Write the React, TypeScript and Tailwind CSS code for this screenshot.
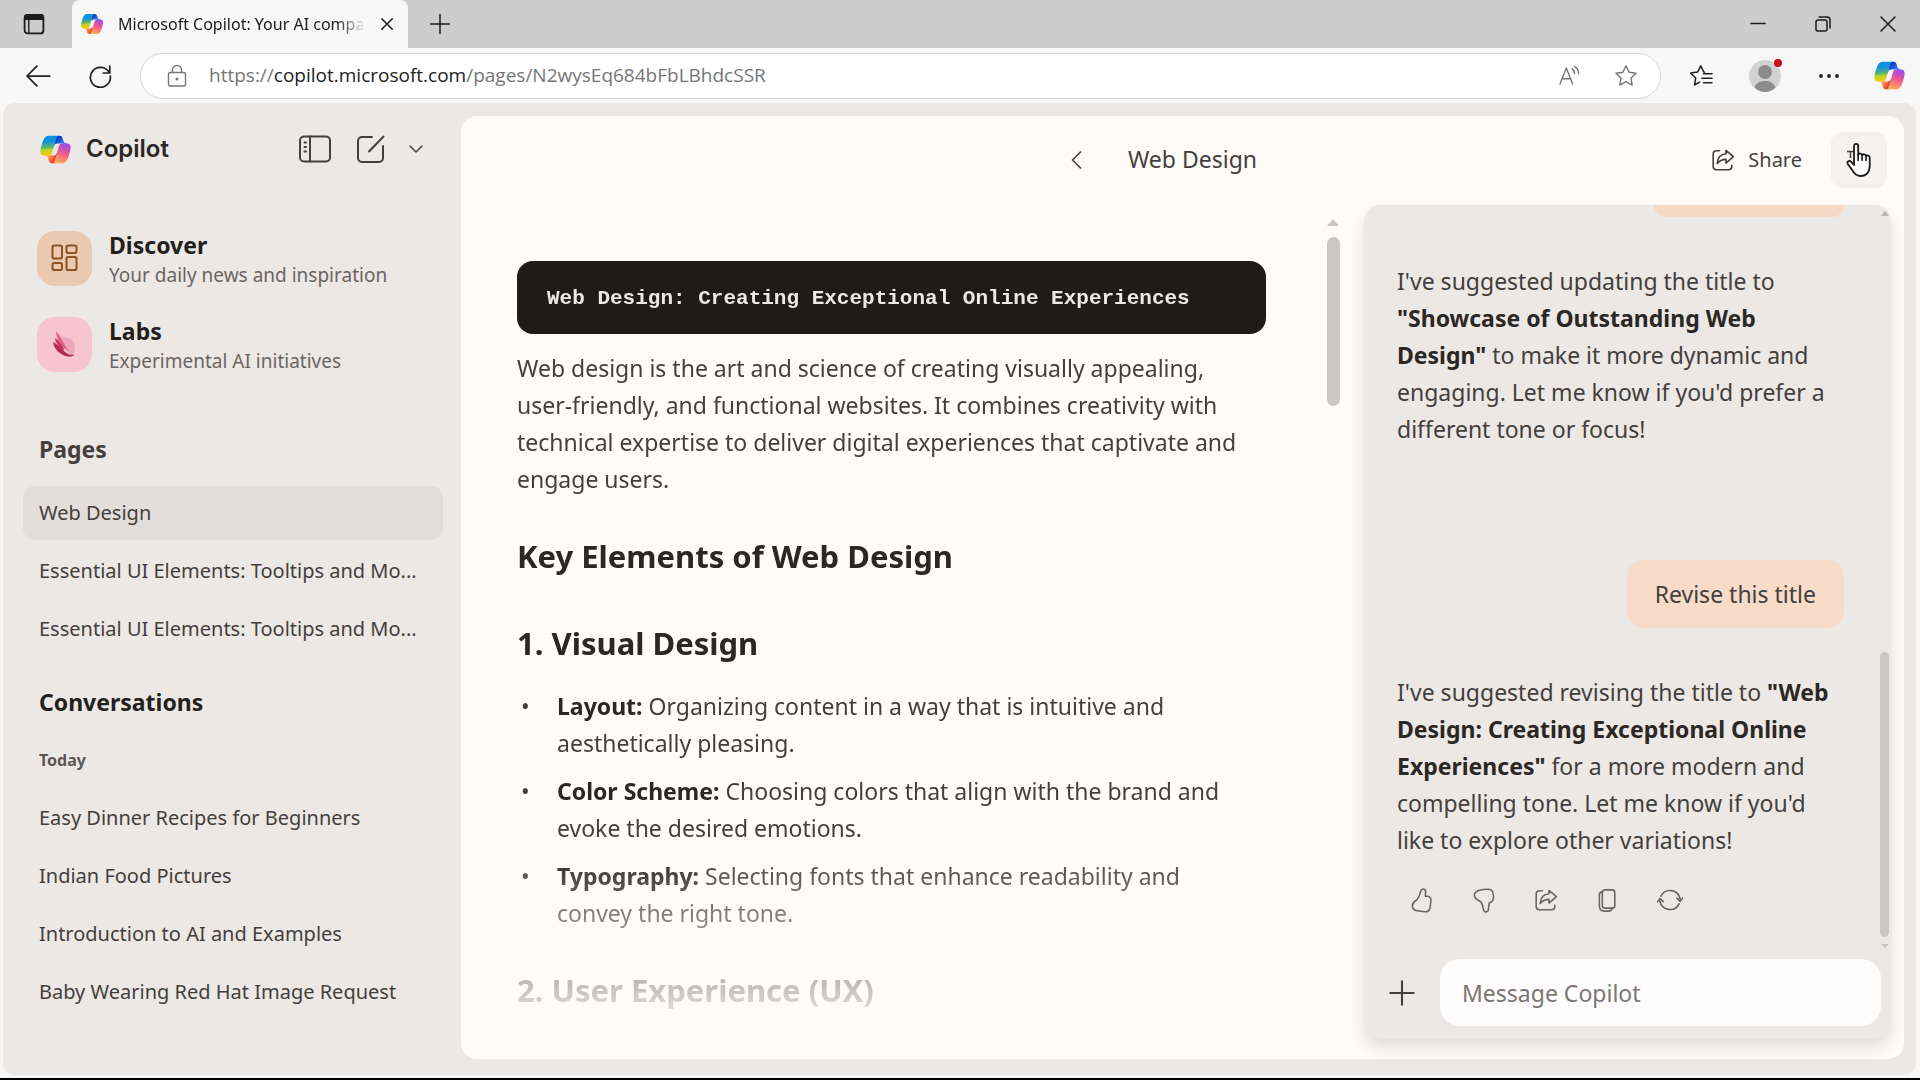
import { ReactNode, useId } from "react";

type IconProps = {
  className?: string;
  children?: ReactNode;
  viewBox?: string;
  strokeWidth?: number;
};

function Icon({
  className,
  children,
  viewBox = "0 0 24 24",
  strokeWidth = 1.5,
}: IconProps) {
  return (
    <svg
      className={className}
      viewBox={viewBox}
      fill="none"
      stroke="currentColor"
      strokeWidth={strokeWidth}
      strokeLinecap="round"
      strokeLinejoin="round"
      aria-hidden="true"
    >
      {children}
    </svg>
  );
}

function CopilotLogo({ className }: { className?: string }) {
  const id = useId();

  return (
    <svg className={className} viewBox="0 0 48 48" fill="none" aria-hidden="true">
      <defs>
        <radialGradient
          id={`${id}a`}
          cx="0"
          cy="0"
          r="1"
          gradientUnits="userSpaceOnUse"
          gradientTransform="matrix(-10.96 -13.39 12.59 -10.31 38 20.4)"
        >
          <stop offset="0.1" stopColor="#00AEFF" />
          <stop offset="0.77" stopColor="#2253CE" />
          <stop offset="1" stopColor="#0736C4" />
        </radialGradient>
        <radialGradient
          id={`${id}b`}
          cx="0"
          cy="0"
          r="1"
          gradientUnits="userSpaceOnUse"
          gradientTransform="matrix(9.88 12.57 -12.19 9.58 11.2 32.8)"
        >
          <stop stopColor="#FFB657" />
          <stop offset="0.63" stopColor="#FF5F3D" />
          <stop offset="0.92" stopColor="#C02B3C" />
        </radialGradient>
        <linearGradient
          id={`${id}c`}
          x1="12.5"
          y1="7.5"
          x2="14.8"
          y2="33.9"
          gradientUnits="userSpaceOnUse"
        >
          <stop offset="0.16" stopColor="#0D91E1" />
          <stop offset="0.49" stopColor="#52B471" />
          <stop offset="0.65" stopColor="#BBD42D" />
          <stop offset="0.94" stopColor="#FFC800" />
        </linearGradient>
        <radialGradient
          id={`${id}d`}
          cx="0"
          cy="0"
          r="1"
          gradientUnits="userSpaceOnUse"
          gradientTransform="matrix(-12.67 36.24 -43.41 -15.18 41.3 12.1)"
        >
          <stop offset="0.07" stopColor="#8C48FF" />
          <stop offset="0.5" stopColor="#F2598A" />
          <stop offset="0.9" stopColor="#FFB152" />
        </radialGradient>
      </defs>
      <path
        fill={`url(#${id}a)`}
        d="M34.142 7.325A4.63 4.63 0 0 0 29.7 4h-1.35a4.63 4.63 0 0 0-4.554 3.794L21.48 20.407l.575-1.965a4.63 4.63 0 0 1 4.444-3.33h7.853l3.294 1.282 3.175-1.283h-.926a4.63 4.63 0 0 1-4.443-3.325l-1.31-4.461Z"
      />
      <path
        fill={`url(#${id}b)`}
        d="M14.33 40.656A4.63 4.63 0 0 0 18.779 44h2.87a4.63 4.63 0 0 0 4.629-4.51l.312-12.163-.654 2.233a4.63 4.63 0 0 1-4.443 3.329h-7.919l-2.823-1.532-3.057 1.532h.912a4.63 4.63 0 0 1 4.447 3.344l1.279 4.423Z"
      />
      <path
        fill={`url(#${id}c)`}
        d="M29.5 4H13.46c-4.583 0-7.332 6.057-9.165 12.113C2.123 23.29-.72 32.885 7.503 32.885h6.925a4.63 4.63 0 0 0 4.456-3.358 2078.617 2078.617 0 0 1 4.971-17.156c.843-2.843 1.544-5.284 2.621-6.805C27.08 4.714 28.086 4 29.5 4Z"
      />
      <path
        fill={`url(#${id}d)`}
        d="M18.498 44h16.04c4.582 0 7.332-6.058 9.165-12.115 2.171-7.177 5.013-16.775-3.208-16.775h-6.926a4.63 4.63 0 0 0-4.455 3.358 2084.036 2084.036 0 0 1-4.972 17.16c-.842 2.844-1.544 5.285-2.62 6.806-.604.852-1.61 1.566-3.024 1.566Z"
      />
    </svg>
  );
}

function ShareIcon({ className }: { className?: string }) {
  return (
    <Icon className={className} strokeWidth={1.6}>
      <path d="M8.5 2.8H5.4A3.2 3.2 0 0 0 2.2 6v12.6a3.2 3.2 0 0 0 3.2 3.2h12.2a3.2 3.2 0 0 0 3.2-3.2v-1.4" />
      <path d="M15 2.4v3.4C9.8 6.2 6.6 9.4 6.2 15.6c2.2-3 5-4.2 8.8-4.2v3.7l7.4-6.4L15 2.4Z" />
    </Icon>
  );
}

function TabStrip() {
  return (
    <div className="flex h-12 items-stretch bg-[#cdcdcd] text-[#1b1b1b]">
      <div className="flex w-[72px] items-center justify-center rounded-br-lg pr-1">
        <button type="button" aria-label="Tab actions">
          <Icon className="size-6" strokeWidth={1.8}>
            <rect x="2.6" y="3" width="18.8" height="18.4" rx="3" />
            <path d="M3 7V5.4A2.4 2.4 0 0 1 5.4 3h13.2A2.4 2.4 0 0 1 21 5.4V7Z" fill="currentColor" />
            <path d="M6.8 8v13" strokeWidth="1.4" />
          </Icon>
        </button>
      </div>
      <div className="flex w-[336px] items-center rounded-t-lg bg-[#f7f7f7] pl-2">
        <CopilotLogo className="size-6" />
        <span className="ml-[14px] w-[248px] overflow-hidden text-base whitespace-nowrap [mask-image:linear-gradient(to_right,black_88%,transparent)]">
          Microsoft Copilot: Your AI compa
        </span>
        <button type="button" aria-label="Close tab" className="ml-3">
          <Icon className="size-[18px]" strokeWidth={2}>
            <path d="m5 5 14 14M19 5 5 19" />
          </Icon>
        </button>
      </div>
      <button type="button" aria-label="New tab" className="ml-5">
        <Icon className="size-6" strokeWidth={1.5}>
          <path d="M12 2.5v19M2.5 12h19" />
        </Icon>
      </button>
      <div className="ml-auto flex items-center gap-[41px] pr-5">
        <button type="button" aria-label="Minimize">
          <Icon className="size-6">
            <path d="M5 11.5h14" />
          </Icon>
        </button>
        <button type="button" aria-label="Restore">
          <Icon className="size-6">
            <rect x="5" y="8" width="11" height="11" rx="2" />
            <path d="M8 5h8a3 3 0 0 1 3 3v8" />
          </Icon>
        </button>
        <button type="button" aria-label="Close">
          <Icon className="size-6">
            <path d="m5 5 14 14M19 5 5 19" />
          </Icon>
        </button>
      </div>
    </div>
  );
}

function Toolbar() {
  return (
    <div className="flex h-[55px] items-center bg-[#f7f7f7] pr-[14px] pl-6 text-[#222]">
      <button type="button" aria-label="Back">
        <Icon className="size-7" strokeWidth={1.5}>
          <path d="M22 12H3m8-8.5L2.6 12l8.4 8.5" />
        </Icon>
      </button>
      <button type="button" aria-label="Refresh" className="ml-9">
        <Icon className="size-6" strokeWidth={1.7}>
          <path d="M21.4 9A10 10 0 1 0 22.3 12M21.8 2v7h-6.6" />
        </Icon>
      </button>
      <div className="ml-7 flex h-[46px] flex-1 items-center rounded-full border border-[#d6d6d6] bg-white pr-[22px] pl-6 text-[#767676]">
        <Icon className="size-6" strokeWidth={1.4}>
          <rect x="3.5" y="8.5" width="17" height="13.5" rx="2" />
          <path d="M7.5 8.5V6a4.5 4.5 0 0 1 9 0v2.5" />
          <circle cx="12" cy="15" r="0.8" fill="currentColor" />
        </Icon>
        <span className="ml-5 font-['Open_Sans',sans-serif] text-[19px] whitespace-nowrap">
          https://<span className="text-[#222]">copilot.microsoft.com</span>
          /pages/N2wysEq684bFbLBhdcSSR
        </span>
        <button type="button" aria-label="Read aloud" className="ml-auto">
          <Icon className="size-6" strokeWidth={1.4}>
            <path d="m2 20 6.3-16L14.6 20M4.2 14.8h8.2M14.2 4.6c1.4 1.2 2.3 3 2.3 5.2M16.8 2.4c2.4 1.8 3.8 4.4 3.8 7.4" />
          </Icon>
        </button>
        <button type="button" aria-label="Add to favorites" className="ml-8">
          <Icon className="size-6" strokeWidth={1.4}>
            <path d="m12 1.8 3.1 6.4 7 1-5.1 4.9 1.2 7-6.2-3.4-6.2 3.4 1.2-7L1.9 9.2l7-1L12 1.8Z" />
          </Icon>
        </button>
      </div>
      <button type="button" aria-label="Favorites" className="ml-7">
        <Icon className="size-6" strokeWidth={1.5}>
          <path d="m15.5 8.2-.6-.1-3.2-6.3-3.1 6.3-6.9 1 5 4.9-1.2 7 5.2-2.8M14.5 9.8H23M13 14.2h10M14.5 18.8H23" />
        </Icon>
      </button>
      <button type="button" aria-label="Profile" className="relative ml-9">
        <svg className="size-8" viewBox="0 0 32 32" aria-hidden="true">
          <circle cx="16" cy="16" r="16" fill="#d2d2d2" />
          <circle cx="16" cy="12" r="7" fill="#8c8c8c" />
          <path d="M5.5 27.5c1.5-4.5 5.5-6.500 10.500-6.500s9 2 10.500 6.500A16 16 0 0 1 16 32a16 16 0 0 1-10.500-4.500Z" fill="#8c8c8c" />
        </svg>
        <span className="absolute -top-px -right-px size-2 rounded-full bg-[#c50f1f]" />
      </button>
      <button type="button" aria-label="Settings and more" className="ml-9">
        <Icon className="size-6">
          <g fill="currentColor" stroke="none">
            <circle cx="4" cy="12" r="1.9" />
            <circle cx="12" cy="12" r="1.9" />
            <circle cx="20" cy="12" r="1.9" />
          </g>
        </Icon>
      </button>
      <button type="button" aria-label="Copilot" className="ml-8">
        <CopilotLogo className="size-[33px]" />
      </button>
    </div>
  );
}

const pages = [
  "Web Design",
  "Essential UI Elements: Tooltips and Mo...",
  "Essential UI Elements: Tooltips and Mo...",
];

const conversations = [
  "Easy Dinner Recipes for Beginners",
  "Indian Food Pictures",
  "Introduction to AI and Examples",
  "Baby Wearing Red Hat Image Request",
];

type SidebarItemProps = {
  title: string;
  active?: boolean;
};

function SidebarItem({ title, active }: SidebarItemProps) {
  return (
    <li className="flex h-[58px] items-center">
      <a
        href="#"
        className={
          active
            ? "flex h-[54px] w-full items-center rounded-xl bg-[#e2dedb] px-4 whitespace-nowrap"
            : "flex h-[54px] w-full items-center px-4 whitespace-nowrap"
        }
      >
        {title}
      </a>
    </li>
  );
}

type FeatureProps = {
  title: string;
  text: string;
  icon: ReactNode;
};

function Feature({ title, text, icon }: FeatureProps) {
  return (
    <a href="#" className="flex h-14 items-center gap-[17px]">
      {icon}
      <span className="flex flex-col pt-1">
        <span className="text-[23px] leading-[30px] font-bold text-[#221f1d]">{title}</span>
        <span className="text-[19px] leading-[30px] text-[#6b6562]">{text}</span>
      </span>
    </a>
  );
}

function Sidebar() {
  return (
    <aside className="w-[458px] shrink-0 pr-[18px] pl-5 text-xl text-[#443f3c]">
      <div className="flex h-[92px] items-center pl-4">
        <CopilotLogo className="size-[33px]" />
        <span className="ml-[14px] font-['Inter',sans-serif] text-2xl font-semibold text-[#2b2725]">
          Copilot
        </span>
        <div className="ml-auto flex items-center pr-[18px]">
          <button type="button" aria-label="Toggle sidebar">
            <Icon className="h-7 w-8" viewBox="0 0 32 28" strokeWidth={2}>
              <rect x="1" y="1.5" width="30" height="25" rx="4" />
              <path d="M11 1.5v25M5.5 7.5H7M5.5 12H7M5.5 16.5H7" />
            </Icon>
          </button>
          <button type="button" aria-label="New chat" className="ml-[26px]">
            <Icon className="size-7" viewBox="0 0 28 28" strokeWidth={2}>
              <path d="M15 2H5a4 4 0 0 0-4 4v17a4 4 0 0 0 4 4h17a4 4 0 0 0 4-4V11M12 16.5 26.5 1.5" />
            </Icon>
          </button>
          <button type="button" aria-label="More" className="ml-[22px]">
            <Icon className="size-[18px]" strokeWidth={2}>
              <path d="m4 8 8 8 8-8" />
            </Icon>
          </button>
        </div>
      </div>

      <nav className="mt-[35px] flex flex-col gap-[30px] pl-[14px]">
        <Feature
          title="Discover"
          text="Your daily news and inspiration"
          icon={
            <span className="flex size-[55px] items-center justify-center rounded-[18px] bg-[#ebc8b0] text-[#8a5227]">
              <Icon className="size-7" viewBox="0 0 28 28" strokeWidth={2}>
                <rect x="1.500" y="1.500" width="9.500" height="13" rx="1.800" />
                <rect x="15.500" y="1.500" width="10" height="7.500" rx="1.800" />
                <rect x="1.500" y="19" width="9.500" height="7" rx="1.800" />
                <rect x="15.500" y="13" width="10" height="13" rx="1.800" />
              </Icon>
            </span>
          }
        />
        <Feature
          title="Labs"
          text="Experimental AI initiatives"
          icon={
            <span className="flex size-[55px] items-center justify-center rounded-[18px] bg-[#f7c5cf]">
              <svg className="size-7" viewBox="0 0 28 28" aria-hidden="true">
                <path d="M5.500 1.500c4 3 7 6.500 10.500 6.500 5 0 8 4 8 9.500 0 3-1 6-2.500 7.500C16 22 9.500 14 5.500 1.500Z" fill="#eda6bd" />
                <path d="M5 1.500C5 7 8 12.500 12 17l6 5C14 15 10 7.500 5 1.500Z" fill="#db6386" />
                <path d="M2 12c.5 6.500 7 13 14.500 14.500 3.500.5 6.500-.5 7-2-5 1-8.500-1-12-5C9 16.500 5.500 13.500 2 12Z" fill="#b62a56" />
                <path d="M4 8c0 4 4.500 10 9.500 12.500C11.500 15 8 10.500 4 8Z" fill="#cc2f5e" />
              </svg>
            </span>
          }
        />
      </nav>

      <h2 className="mt-[59px] pl-4 text-[23px] leading-9 font-bold">Pages</h2>
      <ul className="mt-[17px]">
        {pages.map((title, index) => (
          <SidebarItem key={index} title={title} active={index === 0} />
        ))}
      </ul>

      <h2 className="mt-[26px] pl-4 text-[23px] leading-9 font-bold text-[#221f1d]">
        Conversations
      </h2>
      <h3 className="mt-[27px] pl-4 text-base leading-[26px] font-bold text-[#5c5653]">Today</h3>
      <ul className="mt-4">
        {conversations.map((title) => (
          <SidebarItem key={title} title={title} />
        ))}
      </ul>
    </aside>
  );
}

function PageHeader() {
  return (
    <header className="relative flex h-[89px] shrink-0 items-center justify-center pr-9 pb-0.5">
      <button type="button" aria-label="Back to pages" className="flex h-14 w-14 items-center justify-center">
        <Icon className="size-6" strokeWidth={1.7}>
          <path d="M15.500 4 7.500 12l8 8" />
        </Icon>
      </button>
      <h1 className="px-[23px] text-[23px]">Web Design</h1>
      <div className="absolute right-[17px] flex items-center gap-[29px]">
        <button type="button" className="flex items-center gap-[13px] text-xl">
          <ShareIcon className="size-6" />
          Share
        </button>
        <button
          type="button"
          aria-label="More options"
          className="flex size-14 items-center justify-center rounded-xl bg-[#f5f1ef]"
        >
          <svg className="h-9 w-8" viewBox="0 0 32 36" aria-hidden="true">
            <path d="M4 9.500h8M7.500 10v6" stroke="#443f3c" strokeWidth="1.500" />
            <path
              d="M11 19.500V4.200c0-3 4.200-3 4.200 0v8.500c.600-1.800 3.600-1.500 3.900.600.800-1.700 3.600-1.300 3.900.800 1-1.300 3.700-.700 3.700 1.600v8.500c0 5.800-3.700 9.800-9 9.800-4.300 0-6.500-2.300-8.500-6L4.800 22c-1.300-2.400 1.400-4.200 3.200-2.300l3 3.300v-3.500Z"
              fill="#fff"
              stroke="#1b1b1b"
              strokeWidth="1.800"
              strokeLinejoin="round"
            />
            <path d="M15.200 12.500v6M19.100 13.500v5M23 14.200v4.300" stroke="#1b1b1b" strokeWidth="1.600" strokeLinecap="round" />
          </svg>
        </button>
      </div>
    </header>
  );
}

const elements = [
  {
    term: "Layout:",
    lines: ["Organizing content in a way that is intuitive and", "aesthetically pleasing."],
  },
  {
    term: "Color Scheme:",
    lines: ["Choosing colors that align with the brand and", "evoke the desired emotions."],
  },
  {
    term: "Typography:",
    lines: ["Selecting fonts that enhance readability and", "convey the right tone."],
  },
];

function Document() {
  return (
    <div className="flex min-w-0 flex-1">
      <article className="mb-12 min-w-0 flex-1 overflow-hidden pt-14 pl-14 text-[23px] leading-[37px] [mask-image:linear-gradient(to_bottom,black_80%,rgba(0,0,0,0.15)_100%)]">
        <pre className="rounded-2xl bg-[#1f1b18] px-[30px] pt-[19px] pb-[17px] font-['Liberation_Mono',monospace] text-[21px] font-bold text-[#ece8e4]">
          Web Design: Creating Exceptional Online Experiences
        </pre>
        <p className="mt-4 whitespace-nowrap">
          Web design is the art and science of creating visually appealing,
          <br />
          user-friendly, and functional websites. It combines creativity with
          <br />
          technical expertise to deliver digital experiences that captivate and
          <br />
          engage users.
        </p>
        <h2 className="mt-9 text-[31px] leading-[44px] font-bold text-[#2b2725]">
          Key Elements of Web Design
        </h2>
        <h3 className="mt-[43px] text-[31px] leading-[44px] font-bold text-[#2b2725]">
          1. Visual Design
        </h3>
        <ul className="mt-[23px] flex flex-col gap-[11px] whitespace-nowrap">
          {elements.map(({ term, lines }) => (
            <li key={term} className="flex">
              <span className="w-10 pl-1">•</span>
              <span>
                <strong className="text-[#2b2725]">{term}</strong> {lines[0]}
                <br />
                {lines[1]}
              </span>
            </li>
          ))}
        </ul>
        <h3 className="mt-9 text-[31px] leading-[44px] font-bold text-[#2b2725]">
          2. User Experience (UX)
        </h3>
      </article>
      <div className="ml-[59px] flex w-4 flex-col items-center pt-[14px]">
        <span className="border-x-6 border-b-7 border-x-transparent border-b-[#c9c5c2]" />
        <span className="mt-[11px] h-[169px] w-[13px] rounded-full bg-[#cbc7c4]" />
      </div>
    </div>
  );
}

function MessageActions() {
  return (
    <div className="mt-7 flex gap-[37px] pl-[13px] text-[#6b6562]">
      <button type="button" aria-label="Like">
        <Icon className="size-[25px]">
          <path d="M12.8 1c1.500.2 2.200 1.300 2.200 2.800l-.3 4.200h1.800c2.400 0 3.800 1.500 3.600 3.900l-.7 6.400c-.4 3.200-2.200 4.900-5.200 4.500l-7.200-1c-3-.4-4.700-2-4.700-4.600 0-2.400 1.200-3.900 3.300-5.200 2.300-1.700 3.300-3.800 4.300-7.800.5-1.900 1.500-3.300 2.900-3.200Z" />
        </Icon>
      </button>
      <button type="button" aria-label="Dislike">
        <Icon className="size-[25px]">
          <path d="M13.5 23c1.400-.2 2.100-1.200 2.300-2.700l.7-5.800c3.200-1.200 4.500-3.600 4.100-6.900l-.4-2.500c-.4-2.600-2-3.900-4.600-3.900-3.500 0-6 .3-9.200 1.300C3.600 3.400 2.300 5 2.300 7c0 2.300 1.300 3.600 3.800 4.700 2.400 1.100 3.400 2.300 4 4.900l.8 3.700c.4 1.700 1.100 2.900 2.600 2.700Z" />
        </Icon>
      </button>
      <button type="button" aria-label="Share message">
        <ShareIcon className="size-6" />
      </button>
      <button type="button" aria-label="Copy">
        <Icon className="size-[25px]">
          <rect x="7" y="1.8" width="12" height="17.500" rx="2.500" />
          <path d="M7 3.500C5.300 3.700 4.200 4.800 4.200 6.500V17c0 3.300 1.700 5.200 5 5.200h4.300c1.600 0 2.600-.9 3-2.600" />
        </Icon>
      </button>
      <button type="button" aria-label="Regenerate">
        <Icon className="size-[26px]">
          <path d="M3.600 8.500A9.400 9.400 0 0 1 21.300 11M20.400 15.500A9.400 9.400 0 0 1 2.700 13M18.400 10.300l2.900 3 2.400-3.200M.5 13.700l2.300-3 2.900 2.800" />
        </Icon>
      </button>
    </div>
  );
}

function ChatPanel() {
  return (
    <section className="mr-[13px] mb-5 ml-[23px] flex w-[527px] shrink-0 flex-col overflow-hidden rounded-2xl bg-[#ece8e6] shadow-[0_8px_16px_rgba(0,0,0,0.12)]">
      <div className="flex min-h-0 flex-1">
        <div className="min-w-0 flex-1 overflow-hidden pl-[33px] text-[23px] leading-[37px] whitespace-nowrap">
          <div className="mr-[34px] ml-auto h-3 w-[190px] rounded-b-2xl bg-[#f6dac6]" />
          <p className="mt-[46px]">
            I've suggested updating the title to
            <br />
            <strong className="text-[#2b2725]">
              "Showcase of Outstanding Web
              <br />
              Design"
            </strong>{" "}
            to make it more dynamic and
            <br />
            engaging. Let me know if you'd prefer a
            <br />
            different tone or focus!
          </p>
          <div className="mt-[112px] mr-[34px] ml-auto flex h-[68px] w-fit items-center rounded-2xl bg-[#f8dcc9] px-7">
            Revise this title
          </div>
          <p className="mt-[46px]">
            I've suggested revising the title to{" "}
            <strong className="text-[#2b2725]">
              "Web
              <br />
              Design: Creating Exceptional Online
              <br />
              Experiences"
            </strong>{" "}
            for a more modern and
            <br />
            compelling tone. Let me know if you'd
            <br />
            like to explore other variations!
          </p>
          <MessageActions />
        </div>
        <div className="flex w-[13px] flex-col items-center justify-between pt-[6px]">
          <span className="border-x-4 border-b-5 border-x-transparent border-b-[#b9b5b2]" />
          <div className="flex flex-col items-center gap-[7px]">
            <span className="h-[285px] w-[9px] rounded-full bg-[#cbc7c4]" />
            <span className="border-x-4 border-t-4 border-x-transparent border-t-[#c9c5c2]" />
          </div>
        </div>
      </div>
      <form className="mt-[11px] flex items-center pr-[10px] pb-[13px] pl-6">
        <button type="button" aria-label="Add">
          <Icon className="size-7" strokeWidth={1.8}>
            <path d="M12 2v20M2 12h20" />
          </Icon>
        </button>
        <input
          type="text"
          aria-label="Message Copilot"
          placeholder="Message Copilot"
          className="ml-6 h-[67px] min-w-0 flex-1 rounded-[20px] bg-[#fefcfc] px-[22px] text-[23px] outline-none placeholder:text-[#7b7673]"
        />
      </form>
    </section>
  );
}

export default function App() {
  return (
    <div className="flex h-screen flex-col overflow-hidden border-b-2 border-black bg-[#f7f7f7] font-['Noto_Sans',sans-serif]">
      <TabStrip />
      <Toolbar />
      <div className="mr-1 mb-[3px] ml-[3px] flex min-h-0 flex-1 rounded-xl bg-[#ece8e6] text-[#443f3c]">
        <Sidebar />
        <main className="mt-[13px] mr-3 mb-4 flex min-w-0 flex-1 flex-col rounded-2xl bg-[#fefbf8]">
          <PageHeader />
          <div className="flex min-h-0 flex-1">
            <Document />
            <ChatPanel />
          </div>
        </main>
      </div>
    </div>
  );
}
